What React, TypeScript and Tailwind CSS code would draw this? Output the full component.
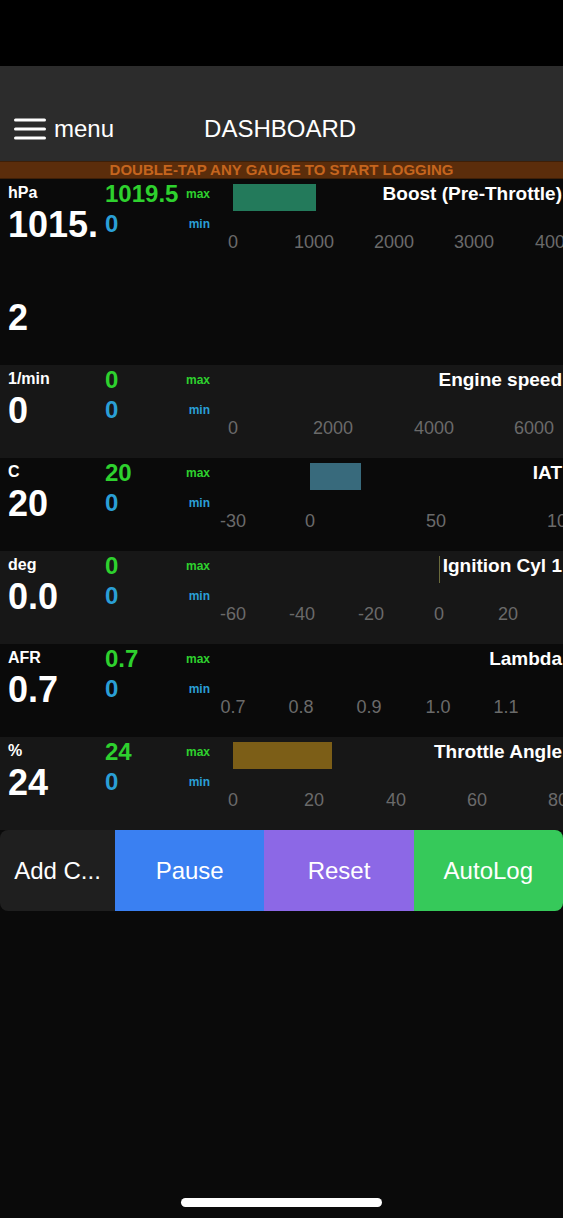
import React from "react";

type Tick = { label: string; x: number };

type Gauge = {
  unit: string;
  value: string[];
  max: string;
  min: string;
  title: string;
  ticks: Tick[];
  bar?: { from: number; to: number; color: string };
  light: boolean;
  height: string;
};

// gauge area begins at x=218 on the page; tick x values are page coordinates
const GAUGE_LEFT = 218;

const gauges: Gauge[] = [
  {
    unit: "hPa",
    value: ["1015.", "2"],
    max: "1019.5",
    min: "0",
    title: "Boost (Pre-Throttle)",
    ticks: [
      { label: "0", x: 233 },
      { label: "1000", x: 314 },
      { label: "2000", x: 394 },
      { label: "3000", x: 474 },
      { label: "4000", x: 555 },
    ],
    bar: { from: 233, to: 316, color: "bg-[#237a5b]" },
    light: false,
    height: "h-[186px]",
  },
  {
    unit: "1/min",
    value: ["0"],
    max: "0",
    min: "0",
    title: "Engine speed",
    ticks: [
      { label: "0", x: 233 },
      { label: "2000", x: 333 },
      { label: "4000", x: 434 },
      { label: "6000", x: 534 },
    ],
    light: true,
    height: "h-[93px]",
  },
  {
    unit: "C",
    value: ["20"],
    max: "20",
    min: "0",
    title: "IAT",
    ticks: [
      { label: "-30", x: 233 },
      { label: "0", x: 310 },
      { label: "50", x: 436 },
      { label: "100", x: 562 },
    ],
    bar: { from: 310, to: 361, color: "bg-[#386a7c]" },
    light: false,
    height: "h-[93px]",
  },
  {
    unit: "deg",
    value: ["0.0"],
    max: "0",
    min: "0",
    title: "Ignition Cyl 1",
    ticks: [
      { label: "-60", x: 233 },
      { label: "-40", x: 302 },
      { label: "-20", x: 371 },
      { label: "0", x: 439 },
      { label: "20", x: 508 },
    ],
    bar: { from: 439, to: 440, color: "bg-[#6b6b3c]" },
    light: true,
    height: "h-[93px]",
  },
  {
    unit: "AFR",
    value: ["0.7"],
    max: "0.7",
    min: "0",
    title: "Lambda",
    ticks: [
      { label: "0.7", x: 233 },
      { label: "0.8", x: 301 },
      { label: "0.9", x: 369 },
      { label: "1.0", x: 438 },
      { label: "1.1", x: 506 },
    ],
    light: false,
    height: "h-[93px]",
  },
  {
    unit: "%",
    value: ["24"],
    max: "24",
    min: "0",
    title: "Throttle Angle",
    ticks: [
      { label: "0", x: 233 },
      { label: "20", x: 314 },
      { label: "40", x: 396 },
      { label: "60", x: 477 },
      { label: "80", x: 558 },
    ],
    bar: { from: 233, to: 332, color: "bg-[#7c5e17]" },
    light: true,
    height: "h-[93px]",
  },
];

function MenuIcon() {
  return (
    <svg width="32" height="22" viewBox="0 0 32 22" fill="none">
      <path d="M1.5 2h29M1.5 11h29M1.5 20h29" stroke="white" strokeWidth="3" strokeLinecap="round" />
    </svg>
  );
}

function GaugeRow({ gauge }: { gauge: Gauge }) {
  return (
    <div className={`flex ${gauge.height} ${gauge.light ? "bg-[#171717]" : "bg-[#0a0a0a]"}`}>
      <div className="w-[105px] shrink-0 pl-2">
        <div className="pt-[5px] text-[16px] font-bold leading-[18px]">{gauge.unit}</div>
        {gauge.value.map((line, i) => (
          <div key={i} className={`text-[36px] font-bold leading-[46px] ${i > 0 ? "mt-[47px]" : ""}`}>
            {line}
          </div>
        ))}
      </div>

      <div className="w-[64px] shrink-0 text-[24px] font-bold leading-[30px]">
        <div className="text-[#2ed12e]">{gauge.max}</div>
        <div className="text-[#2a9fd6]">{gauge.min}</div>
      </div>

      <div className="w-[41px] shrink-0 text-right text-[12px] font-bold leading-[30px]">
        <div className="text-[#2ed12e]">max</div>
        <div className="text-[#2a9fd6]">min</div>
      </div>

      <div className="relative ml-[8px] flex-1 overflow-hidden">
        {gauge.bar && (
          <div
            className={`absolute top-[5px] h-[27px] ${gauge.bar.color}`}
            style={{ left: gauge.bar.from - GAUGE_LEFT, width: gauge.bar.to - gauge.bar.from }}
          />
        )}
        <div className="relative whitespace-nowrap pr-[1px] text-right text-[19px] font-bold leading-[30px]">
          {gauge.title}
        </div>
        {gauge.ticks.map((t) => (
          <span
            key={t.label}
            className="absolute top-[51px] -translate-x-1/2 text-[18px] leading-[24px] text-[#6a6a6a]"
            style={{ left: t.x - GAUGE_LEFT }}
          >
            {t.label}
          </span>
        ))}
      </div>
    </div>
  );
}

export default function App() {
  return (
    <div className="flex h-[1218px] flex-col overflow-hidden bg-[#0a0a0a] font-['Liberation_Sans',Arial,sans-serif] text-white">
      <div className="h-[66px] shrink-0 bg-black" />

      <header className="flex h-[95px] shrink-0 items-center bg-[#2c2c2c] pt-[31px]">
        <div className="ml-[14px] flex items-center">
          <MenuIcon />
          <span className="ml-[8px] text-[24px] leading-[30px]">menu</span>
        </div>
        <span className="ml-[90px] text-[24px] leading-[30px]">DASHBOARD</span>
      </header>

      <div className="h-[18px] shrink-0 border-y border-[#3e1f07] bg-[#5b2d0b] text-center text-[15px] font-bold leading-[16px] text-[#c5651e]">
        DOUBLE-TAP ANY GAUGE TO START LOGGING
      </div>

      {gauges.map((g) => (
        <GaugeRow key={g.title} gauge={g} />
      ))}

      <div className="flex h-[81px] shrink-0 overflow-hidden rounded-lg text-[24px] leading-[30px]">
        <button className="w-[115px] shrink-0 bg-[#1f1f1f] text-white">Add C...</button>
        <button className="flex-1 bg-[#3a80f2] text-white">Pause</button>
        <button className="flex-1 bg-[#8c68e6] text-white">Reset</button>
        <button className="flex-1 bg-[#36c95a] text-white">AutoLog</button>
      </div>

      <div className="mt-auto mb-[11px] h-[9px] w-[201px] self-center rounded-full bg-white" />
    </div>
  );
}
